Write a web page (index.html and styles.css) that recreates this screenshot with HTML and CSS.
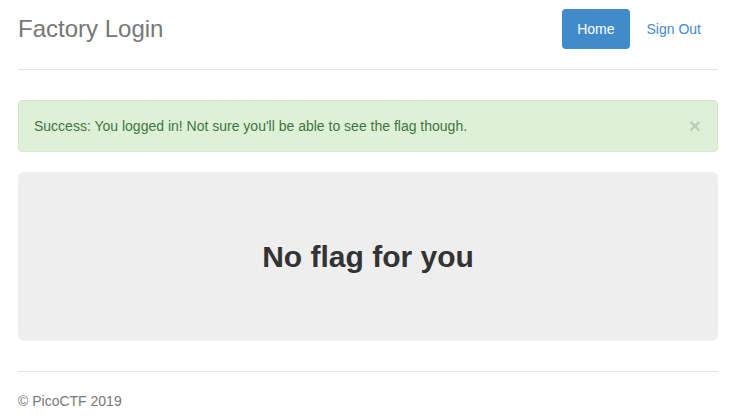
FILE: index.html
```html
<!DOCTYPE html>
<html>
<head>
<meta charset="utf-8">
<title>Factory Login</title>
<link rel="stylesheet" href="styles.css">
</head>
<body>
<div class="container">
  <div class="header">
    <h3 class="brand">Factory Login</h3>
    <ul class="nav">
      <li><a class="pill active" href="#">Home</a></li>
      <li><a class="pill" href="#">Sign Out</a></li>
    </ul>
  </div>
  <div class="alert">
    <span>Success: You logged in! Not sure you'll be able to see the flag though.</span>
    <button class="close" type="button">×</button>
  </div>
  <div class="jumbotron">
    <h2 class="flag">No flag for you</h2>
  </div>
  <div class="footer">
    <p>© PicoCTF 2019</p>
  </div>
</div>
</body>
</html>
```
FILE: styles.css
```css
* { box-sizing: border-box; }
html, body { margin: 0; padding: 0; }
body {
  font-family: "Liberation Sans", Arial, Helvetica, sans-serif;
  font-size: 14px;
  line-height: 20px;
  color: #333;
  background: #fff;
}
.container {
  padding: 9px 18px 0 18px;
}
.header {
  display: flex;
  justify-content: space-between;
  align-items: flex-start;
  padding-bottom: 20px;
  border-bottom: 1px solid #e5e5e5;
  margin-bottom: 30px;
}
.brand {
  margin: 0;
  font-size: 24px;
  font-weight: 500;
  line-height: 40px;
  color: #777;
}
.nav {
  list-style: none;
  margin: 0 2px 0 0;
  padding: 0;
  display: flex;
  gap: 2px;
}
.pill {
  display: block;
  padding: 10px 15px;
  line-height: 20px;
  border-radius: 4px;
  color: #428bca;
  text-decoration: none;
}
.pill.active {
  background: #428bca;
  color: #fff;
}
.alert {
  display: flex;
  justify-content: space-between;
  align-items: center;
  padding: 15px;
  background: #dff0d8;
  border: 1px solid #d6e9c6;
  border-radius: 4px;
  color: #3c763d;
  margin-bottom: 20px;
}
.close {
  background: none;
  border: 0;
  padding: 0;
  margin: 0 1px 0 0;
  font-family: inherit;
  font-size: 21px;
  font-weight: bold;
  line-height: 20px;
  color: #000;
  opacity: 0.15;
  cursor: pointer;
}
.jumbotron {
  background: #eee;
  border-radius: 6px;
  padding: 68px 0 68px;
  text-align: center;
  margin-bottom: 30px;
}
.flag {
  margin: 0;
  font-size: 30px;
  font-weight: bold;
  line-height: 33px;
  color: #333;
}
.footer {
  border-top: 1px solid #e5e5e5;
  padding-top: 19px;
  color: #777;
}
.footer p { margin: 0 0 10px; }
```
